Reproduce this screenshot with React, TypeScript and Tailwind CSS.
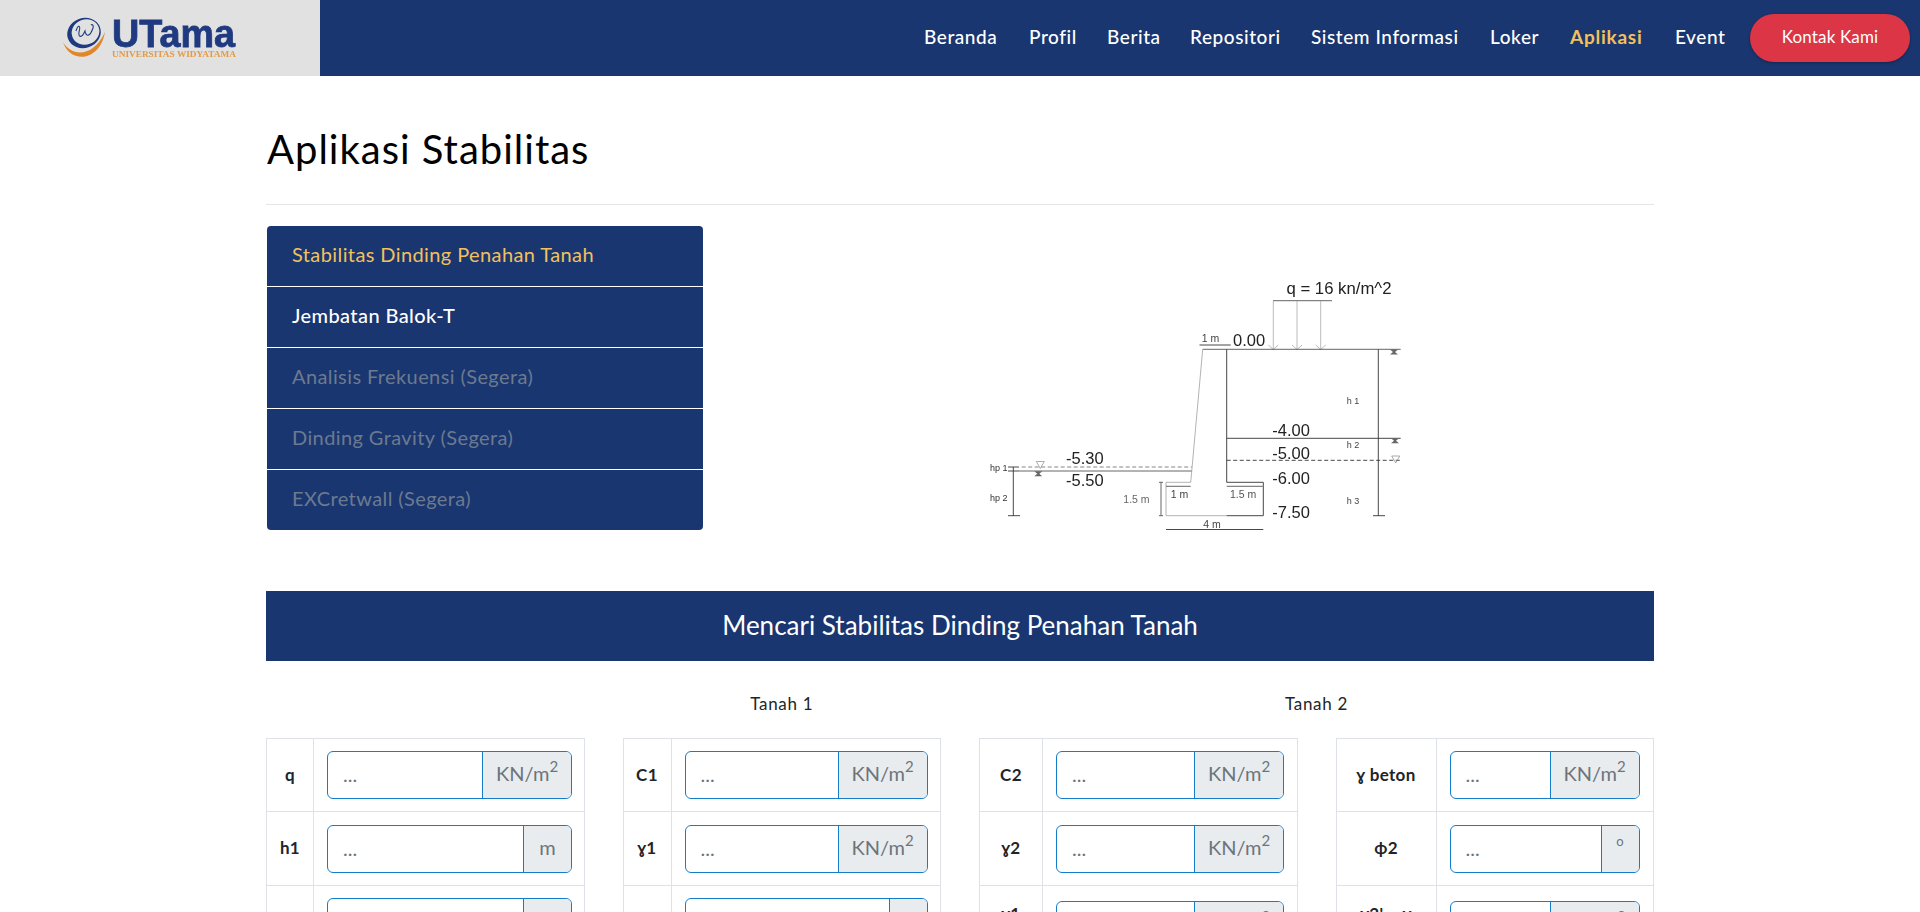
import React from "react";

const navy = "bg-[#193670]";

function Logo() {
  return (
    <svg width="320" height="76" viewBox="0 0 320 76" className="blur-[0.4px]">
      <ellipse cx="84" cy="33" rx="17" ry="15" fill="#1f3a80" transform="rotate(-20 84 33)" />
      <ellipse cx="85.5" cy="32" rx="14" ry="12.5" fill="#e1e1e1" transform="rotate(-20 85.5 32)" />
      <path d="M63 42 C70 55 92 60 105 32 C100 62 70 64 63 42 Z" fill="#e0872a" />
      <path d="M76 31 C78 24 81 25 79 32 C78 38 82 38 85 31 C86 37 90 37 93 28 C94 25 92 24 91 25" fill="none" stroke="#1f3a80" strokeWidth="1.1" />
      <text x="112" y="47" fontFamily="Liberation Sans" fontWeight="700" fontSize="38" fill="#1f3a80" stroke="#1f3a80" strokeWidth="0.8" textLength="123" lengthAdjust="spacingAndGlyphs">UTama</text>
      <text x="112" y="57" fontFamily="Liberation Serif" fontWeight="700" fontSize="8.5" fill="#e39a45" textLength="124" lengthAdjust="spacingAndGlyphs">UNIVERSITAS WIDYATAMA</text>
    </svg>
  );
}

const navItems = [
  ["Beranda", "w-[75px]"],
  ["Profil", "w-[48px]"],
  ["Berita", "w-[53px]"],
  ["Repositori", "w-[91px]"],
  ["Sistem Informasi", "w-[149px]"],
  ["Loker", "w-[50px]"],
  ["Aplikasi", "w-[75px]"],
  ["Event", "w-[50px]"],
];

function Header() {
  return (
    <header className={`flex h-[76px] ${navy}`}>
      <div className="w-[320px] bg-[#e1e1e1]">
        <Logo />
      </div>
      <nav className="flex flex-1 items-center justify-end gap-[30px] pr-[10px] text-[19px] tracking-[0.03em] text-white">
        {navItems.map(([label, w]) => (
          <a key={label} className={`${w} whitespace-nowrap pb-[2px] ${label === "Aplikasi" ? "font-bold tracking-[0.04em] text-[#f2c15c]" : "font-medium"}`}>
            {label}
          </a>
        ))}
        <a className="-ml-[5px] flex h-[48px] w-[160px] items-center justify-center rounded-full bg-[#dc3545] pb-[2px] text-[17px] tracking-[0.01em] shadow-[0_1px_3px_rgba(0,0,0,0.3)]">
          Kontak Kami
        </a>
      </nav>
    </header>
  );
}

const menu = [
  ["Stabilitas Dinding Penahan Tanah", "text-[#f2c15c] h-[60px]"],
  ["Jembatan Balok-T", "text-white font-medium h-[61px] border-t border-white"],
  ["Analisis Frekuensi (Segera)", "text-[#6c7a8f] h-[61px] border-t border-white"],
  ["Dinding Gravity (Segera)", "text-[#6c7a8f] h-[61px] border-t border-white"],
  ["EXCretwall (Segera)", "text-[#6c7a8f] h-[61px] border-t border-white"],
];

function Menu() {
  return (
    <div className={`ml-px w-[436px] overflow-hidden rounded-[4px] ${navy}`}>
      {menu.map(([label, c]) => (
        <div key={label} className={`flex items-center pb-[4px] pl-[25px] text-[20px] tracking-[0.02em] ${c}`}>
          {label}
        </div>
      ))}
    </div>
  );
}

function Diagram() {
  const dark = "#333";
  const gray = "#aaa";
  const T = (p: { x: number; y: number; s?: number; c?: string; w?: number; t: string }) => (
    <text x={p.x} y={p.y} fontFamily="Liberation Sans" fontSize={p.s ?? 16.5} fill={p.c ?? "#222"} textLength={p.w} lengthAdjust={p.w ? "spacingAndGlyphs" : undefined}>
      {p.t}
    </text>
  );
  const L = (x1: number, y1: number, x2: number, y2: number, c = dark, d?: string, sw = 0.9) => (
    <line x1={x1} y1={y1} x2={x2} y2={y2} stroke={c} strokeWidth={sw} strokeDasharray={d} />
  );
  const arrow = (x: number) => (
    <g>
      {L(x, 41, x, 89, gray, undefined, 0.8)}
      <path d={`M${x - 5} 85 L${x} 89.5 L${x + 5} 85`} fill="none" stroke={gray} strokeWidth="0.8" />
    </g>
  );
  const hatch = (x: number, y: number) => (
    <g>
      <path d={`M${x - 4} ${y - 2} L${x + 4} ${y - 2} L${x + 1} ${y + 0.5} L${x + 4} ${y + 3} L${x - 4} ${y + 3} L${x - 1} ${y + 0.5} Z`} fill="#666" />
    </g>
  );
  const tri = (x: number, y: number) => <path d={`M${x - 4} ${y - 3} L${x + 4} ${y - 3} L${x} ${y + 4} Z`} fill="none" stroke="#888" strokeWidth="0.7" />;
  return (
    <svg width="480" height="280" viewBox="0 0 480 280" className="mt-[34px] ml-[257px] blur-[0.3px]">
      <T x={326.5} y={33.5} t="q = 16 kn/m^2" w={105} />
      {L(313, 40.7, 372, 40.7, "#555")}
      {arrow(313.3)}
      {arrow(337)}
      {arrow(360.7)}
      <T x={273} y={85.5} t="0.00" />
      <T x={241.7} y={82} s={10.5} t="1 m" c="#444" />
      {L(239.5, 85, 270.7, 85)}
      {L(242.7, 89.3, 440.7, 89.3, "#555")}
      {L(266.7, 89.3, 266.7, 222.3)}
      {L(242.7, 89.3, 231.7, 211.7, gray)}
      {L(231.7, 211.7, 230.7, 222.3, gray)}
      {L(206, 222.3, 230.7, 222.3, gray)}
      {L(206, 222.3, 206, 255.7, gray)}
      {L(206, 255.7, 266.7, 255.7, gray)}
      {L(266.7, 255.7, 303.3, 255.7)}
      {L(266.7, 222.3, 303.3, 222.3)}
      {L(303.3, 222.3, 303.3, 255.7)}
      {L(206, 226.3, 230.7, 226.3, "#555")}
      {L(266.7, 226.3, 302.7, 226.3, "#555")}
      <T x={210.7} y={237.5} s={10.5} t="1 m" c="#444" />
      <T x={270} y={237.5} s={10.5} t="1.5 m" c="#555" />
      <T x={163.3} y={242.5} s={10.5} t="1.5 m" c="#666" />
      {L(201, 222.3, 201, 255.7, "#555")}
      {L(199, 222.3, 203, 222.3, "#555")}
      {L(199, 255.7, 203, 255.7, "#555")}
      <T x={243.3} y={267.5} s={10.5} t="4 m" c="#444" />
      {L(206, 269.5, 303.3, 269.5)}
      {L(418.3, 89.3, 418.3, 255.7)}
      {L(413, 255.7, 425, 255.7)}
      <T x={312.3} y={175.5} t="-4.00" />
      {L(266.7, 178.3, 440.7, 178.3)}
      <T x={312.3} y={198.5} t="-5.00" />
      {L(266.7, 200.3, 440.7, 200.3, dark, "4 2.5")}
      <T x={312.3} y={224} t="-6.00" />
      <T x={312.3} y={257.5} t="-7.50" />
      <T x={386.7} y={144} s={9} t="h 1" c="#444" />
      <T x={386.7} y={187.7} s={9} t="h 2" c="#444" />
      <T x={386.7} y={244.3} s={9} t="h 3" c="#444" />
      {hatch(434, 91.5)}
      {hatch(435, 180.3)}
      {tri(435.7, 199)}
      <T x={30} y={211.3} s={9} t="hp 1" c="#333" />
      <T x={30} y={240.7} s={9} t="hp 2" c="#333" />
      {L(53.3, 207, 53.3, 255.7)}
      {L(48, 207, 59, 207)}
      {L(48, 211, 59, 211)}
      {L(48, 255.7, 60, 255.7)}
      {L(61.7, 207, 231.7, 207, "#777", "4 2.5")}
      {L(59, 211, 231.7, 211, "#555")}
      {tri(80.3, 204.5)}
      {hatch(78.3, 213.3)}
      <T x={106} y={203.5} t="-5.30" />
      <T x={106} y={226} t="-5.50" />
    </svg>
  );
}

type Row = { label?: string; unit: "kn" | "m" | "deg"; top?: boolean };

const KN = (
  <>
    KN/m<sup className="text-[15px]">2</sup>
  </>
);

function InputBox({ unit, w }: { unit: Row["unit"]; w: string }) {
  return (
    <div className={`flex h-[48px] ${w} overflow-hidden rounded-[6px] border border-[#147cc9] text-[20px] text-[#6c757d]`}>
      <div className="flex flex-1 items-center pb-[3px] pl-[15px]">...</div>
      {unit === "kn" && <div className="flex w-[89px] items-center justify-center border-l border-[#147cc9] bg-[#e9ecef] pb-[4px]">{KN}</div>}
      {unit === "m" && <div className="flex w-[48px] items-center justify-center border-l border-[#147cc9] bg-[#e9ecef] pb-[4px]">m</div>}
      {unit === "deg" && (
        <div className="flex w-[38px] justify-center border-l border-[#147cc9] bg-[#e9ecef] pt-[5px] text-[13px] leading-[20px]">o</div>
      )}
    </div>
  );
}

function DataTable({ th, w, rows }: { th: string; w: string; rows: Row[] }) {
  const heights = ["h-[73px]", "h-[74px]", ""];
  const pads = ["pt-[12px]", "pt-[13px]", "pt-[12px]"];
  return (
    <table className="w-full table-fixed border-collapse">
      <tbody>
        {rows.map((r, i) => (
          <tr key={i} className={heights[i]}>
            <th className={`${th} border border-[#dee2e6] text-center text-[17px] font-bold tracking-[0.02em] text-[#212529] ${r.top ? "align-top pt-[15px]" : "align-middle pb-[1px]"}`}>
              {r.label}
            </th>
            <td className={`border border-[#dee2e6] pl-[13px] align-top ${r.top ? "pt-[15px]" : pads[i]} pb-[11px]`}>
              <InputBox unit={r.unit} w={w} />
            </td>
          </tr>
        ))}
      </tbody>
    </table>
  );
}

export default function App() {
  return (
    <div className="h-screen overflow-hidden bg-white font-['Lato','Noto_Sans',sans-serif] text-[16px] text-[#212529]">
      <Header />
      <main className="mx-auto w-[1388px]">
        <h1 className="flex h-[128px] items-center pt-[17px] pl-px text-[40px] leading-none font-normal tracking-[0.025em] text-black">Aplikasi Stabilitas</h1>
        <hr className="border-[#e5e5e5]" />
        <div className="mt-[21px] flex h-[304px] items-start">
          <Menu />
          <Diagram />
        </div>
        <div className={`mt-[61px] flex h-[70px] items-center justify-center pb-[2px] ${navy} text-[26px] text-white`}>
          Mencari Stabilitas Dinding Penahan Tanah
        </div>
        <div className="mt-[31px] grid h-[24px] grid-cols-4 gap-[38px] text-center text-[17px] leading-[24px] tracking-[0.04em]">
          <div />
          <div>Tanah 1</div>
          <div className="col-span-2">Tanah 2</div>
        </div>
        <div className="mt-[22px] grid grid-cols-4 gap-[38px]">
          <DataTable th="w-[47px]" w="w-[245px]" rows={[{ label: "q", unit: "kn" }, { label: "h1", unit: "m" }, { unit: "m" }]} />
          <DataTable th="w-[48px]" w="w-[243px]" rows={[{ label: "C1", unit: "kn" }, { label: "ɣ1", unit: "kn" }, { unit: "deg" }]} />
          <DataTable th="w-[63px]" w="w-[228px]" rows={[{ label: "C2", unit: "kn" }, { label: "ɣ2", unit: "kn" }, { label: "ɣ1", unit: "kn", top: true }]} />
          <DataTable th="w-[100px]" w="w-[190px]" rows={[{ label: "ɣ beton", unit: "kn" }, { label: "ϕ2", unit: "deg" }, { label: "ɣ2' = ɣ", unit: "kn", top: true }]} />
        </div>
      </main>
    </div>
  );
}
